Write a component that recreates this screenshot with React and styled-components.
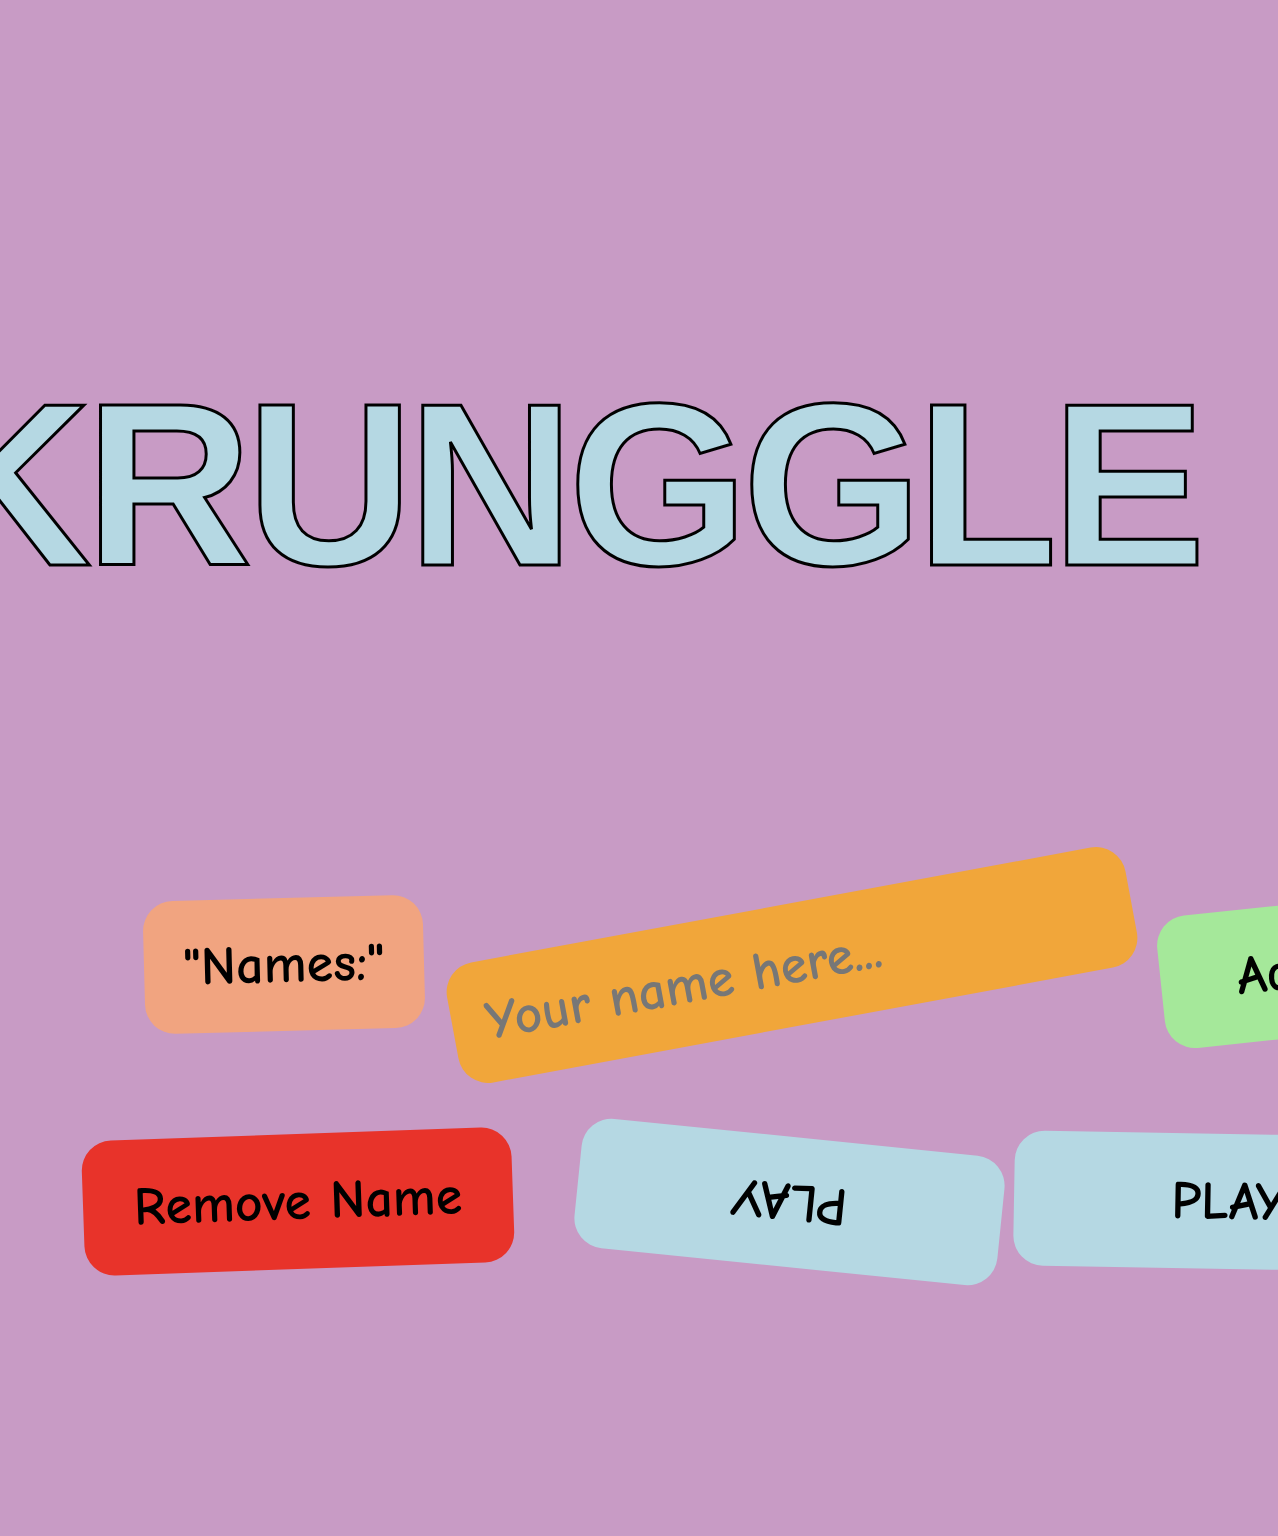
import styled, { createGlobalStyle } from "styled-components";

const GlobalStyle = createGlobalStyle`
  html, body {
    margin: 0;
    padding: 0;
    background: #c89bc5;
    overflow: hidden;
  }
  body {
    font-family: "Liberation Sans", Arial, sans-serif;
  }
`;

const Page = styled.main`
  width: 1278px;
  height: 1536px;
  display: flex;
  flex-direction: column;
  padding-top: 369px;
  box-sizing: border-box;
  overflow: hidden;
`;

const Title = styled.h1`
  margin: 0 0 0 -76px;
  font-family: "Liberation Sans", Arial, sans-serif;
  font-weight: 700;
  font-size: 232px;
  line-height: 1;
  letter-spacing: -6.5px;
  white-space: nowrap;
  color: #b5d8e3;
  -webkit-text-stroke: 3px #000;
`;

const Row = styled.div`
  display: flex;
  align-items: center;
  gap: ${({ $gap }) => $gap}px;
  margin-top: ${({ $top }) => $top}px;
  padding-left: ${({ $left }) => $left}px;
  flex-shrink: 0;
`;

const Tile = styled.div`
  flex-shrink: 0;
  display: flex;
  align-items: center;
  justify-content: center;
  box-sizing: border-box;
  width: ${({ $w }) => $w}px;
  height: ${({ $h }) => $h}px;
  margin-left: ${({ $ml = 0 }) => $ml}px;
  border-radius: 30px;
  background: ${({ $bg }) => $bg};
  transform: rotate(${({ $rot }) => $rot}deg);
  font-family: "Comic Sans MS", "Comic Neue", "Open Sans", sans-serif;
  font-weight: 700;
  font-size: 54px;
  color: #000;
  white-space: nowrap;
`;

const Button = styled(Tile).attrs({ as: "button" })`
  border: none;
  cursor: pointer;
  padding: 0;
`;

const NameInput = styled.input`
  flex-shrink: 0;
  box-sizing: border-box;
  width: 690px;
  height: 122px;
  border: none;
  outline: none;
  border-radius: 30px;
  background: #f1a63a;
  padding: 0 34px;
  transform: rotate(-10.5deg);
  font-family: "Comic Sans MS", "Comic Neue", "Open Sans", sans-serif;
  font-weight: 700;
  font-size: 54px;
  color: #000;

  &::placeholder {
    color: #777777;
  }
`;

export default function App() {
  return (
    <>
      <GlobalStyle />
      <Page>
        <Title>KRUNGGLE</Title>
        <Row $top={297} $left={144} $gap={23}>
          <Tile $w={280} $h={133} $bg="#f1a480" $rot={-1.5}>
            "Names:"
          </Tile>
          <NameInput placeholder="Your name here..." />
          <Button $w={390} $h={133} $bg="#a5e89a" $rot={-6}>
            Add Name
          </Button>
        </Row>
        <Row $top={103} $left={83} $gap={12}>
          <Button $w={430} $h={135} $bg="#e8332a" $rot={-2}>
            Remove Name
          </Button>
          <Button $w={425} $h={130} $bg="#b5d8e3" $rot={185.8} $ml={52}>
            PLAY
          </Button>
          <Button $w={430} $h={135} $bg="#b5d8e3" $rot={1}>
            PLAY
          </Button>
        </Row>
      </Page>
    </>
  );
}
